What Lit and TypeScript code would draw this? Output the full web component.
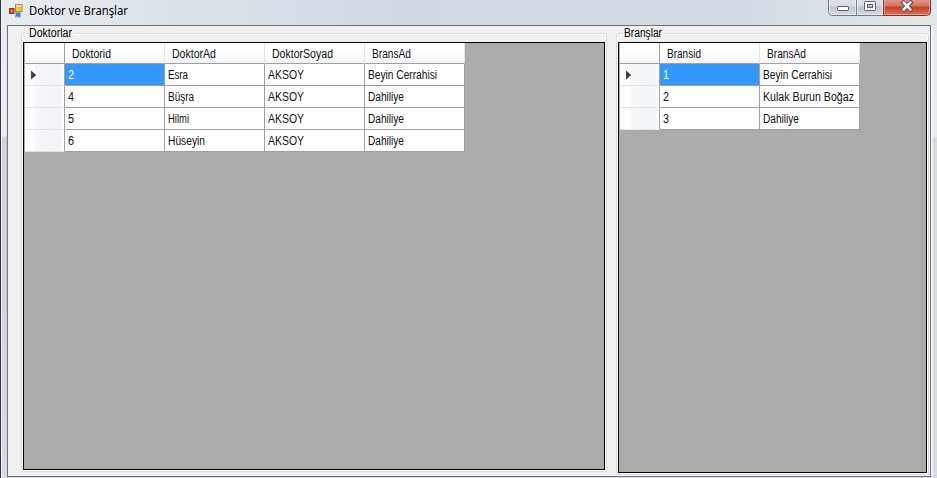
import { LitElement, html, css, svg } from "lit";
import { customElement, property } from "lit/decorators.js";
import { classMap } from "lit/directives/class-map.js";

type Label = [text: string, width: number];

/** Text fitted to a fixed advance width, as the narrow system font sets it. */
@customElement("fit-text")
class FitText extends LitElement {
  @property() text = "";
  @property({ type: Number }) width = 10;
  static styles = css`
    :host { display: block; height: 16px; }
    svg { display: block; height: 16px; overflow: visible; }
    text { font-size: var(--fit-size, 12px); font-family: var(--fit-font, "Liberation Sans", Arial, sans-serif); fill: currentColor; }
  `;
  render() {
    return html`<svg width=${this.width} height="16">
      ${svg`<text x="0" y="12" textLength=${this.width} lengthAdjust="spacingAndGlyphs">${this.text}</text>`}
    </svg>`;
  }
}

@customElement("data-grid")
class DataGrid extends LitElement {
  @property({ attribute: false }) columns: Label[] = [];
  @property({ attribute: false }) rows: Label[][] = [];
  static styles = css`
    :host { display: block; box-sizing: border-box; border: 1px solid #000; background: #ababab; color: #111; overflow: hidden; padding-left: 1px; }
    .row { display: flex; height: 22px; }
    .row.head { height: 21px; }
    .cell { box-sizing: border-box; width: 100px; border-right: 1px solid #a0a0a0; border-bottom: 1px solid #a0a0a0; background: #fff; padding: 3px 0 0 3px; }
    .head .cell { padding: 3px 0 0 7px; border-right-color: #e3e5e9; background: linear-gradient(#fff 45%, #f3f5f8); }
    .cell.selected { background: #3399ff; color: #fff; }
    .stub { box-sizing: border-box; width: 40px; border-right: 1px solid #a0a0a0; border-bottom: 1px solid #e2e4e8; background: linear-gradient(90deg, #fff 25%, #f7f8fa 27%, #f1f3f6 90%, #fff 97%); padding: 6px 0 0 6px; }
    .head .stub { border-bottom-color: #a0a0a0; background: linear-gradient(#fff 45%, #f3f5f8); }
    .stub svg { display: block; }
  `;
  render() {
    return html`
      <div class="row head">
        <div class="stub"></div>
        ${this.columns.map(([t, w]) => html`<div class="cell"><fit-text .text=${t} .width=${w}></fit-text></div>`)}
      </div>
      ${this.rows.map((row, r) => html`<div class="row">
        <div class="stub">${r === 0
          ? html`<svg width="6" height="10" viewBox="0 0 6 10"><path d="M0 .5 5.3 5 0 9.5Z" fill="#404040" /></svg>`
          : ""}</div>
        ${row.map(([t, w], c) => html`<div class=${classMap({ cell: true, selected: r === 0 && c === 0 })}>
          <fit-text .text=${t} .width=${w}></fit-text></div>`)}
      </div>`)}
    `;
  }
}

@customElement("app-root")
class AppRoot extends LitElement {
  static styles = css`
    :host { display: block; width: 937px; height: 478px; overflow: hidden; }
    .window { box-sizing: border-box; width: 937px; height: 478px; border-left: 1px solid #34343c; padding: 0 6px 0 6px; display: flex; flex-direction: column;
      background:
        linear-gradient(90deg, #f5f5f8, #f5f5f8) 0 0 / 1px 478px no-repeat,
        linear-gradient(#f3f5f7, #f3f5f7) 930px 25px / 2px 452px no-repeat,
        linear-gradient(90deg, #e9edf1 0, #dce1e7 180px, #d2d9e1 400px, #d5dbe2 750px, #e3e7ea 937px) 0 0 / 100% 25px no-repeat,
        linear-gradient(#e6eaed 0, #e9ecef 111px, #d5dce2 113px, #d5dce2 100%) 932px 25px / 5px 453px no-repeat,
        linear-gradient(#e7eaef 0, #e9ebef 136px, #cfd0d9 138px, #d8dae1 100%); }
    .title { height: 25px; flex: none; display: flex; align-items: flex-start; color: #000; }
    .logo { margin: 4px 0 0 2px; width: 14px; height: 14px; }
    .title fit-text { margin: 3px 0 0 6px; --fit-font: "Noto Sans", sans-serif; --fit-size: 12px; }
    .buttons { margin: 0 0 0 auto; height: 16px; width: 103px; }
    .client { box-sizing: border-box; height: 452px; border: 1px solid #6d7075; background: #f0f0f0; display: flex; align-items: flex-start; padding: 7px 0 0 13px; gap: 9px; }
    .group { box-sizing: border-box; border: 1px solid #dcdcdc; box-shadow: inset 0 0 0 1px #fff; border-radius: 3px; padding: 8px 1px 0 1px; position: relative; background: #f0f0f0; }
    .doctors { width: 586px; height: 439px; }
    .branches { width: 313px; height: 442px; }
    .legend { position: absolute; left: 6px; top: -9px; height: 16px; padding: 0 2px 0 1px; background: linear-gradient(transparent 4px, #f0f0f0 4px); color: #000; }
    .doctors data-grid { width: 582px; height: 428px; }
    .branches data-grid { width: 309px; height: 431px; }
  `;

  private logo() {
    return html`<svg class="logo" viewBox="0 0 14 14">
      <rect x="6.5" y="8.5" width="5" height="4.5" fill="#3f86e0" stroke="#8fb4e4" />
      <rect x="6.5" y=".5" width="6.500" height="7" fill="#f8c62d" stroke="#b08a3a" />
      <rect x="7" y="1" width="5.500" height="2" fill="#ffe386" />
      <rect x=".5" y="4.500" width="4.500" height="5" fill="#d8402f" stroke="#94302c" />
      <rect x="2" y="6" width="1.500" height="2" fill="#f3a08c" />
    </svg>`;
  }

  private buttons() {
    return html`<svg class="buttons" width="103" height="16" viewBox="0 0 103 16">
      <defs>
        <linearGradient id="glass" x2="0" y2="1">
          <stop offset="0" stop-color="#dfe2e6" /><stop offset=".42" stop-color="#d6dade" />
          <stop offset=".5" stop-color="#bfc6cd" /><stop offset="1" stop-color="#d8dee4" />
        </linearGradient>
        <linearGradient id="red" x2="0" y2="1">
          <stop offset="0" stop-color="#e09c8c" /><stop offset=".4" stop-color="#d37560" />
          <stop offset=".5" stop-color="#c2432b" /><stop offset="1" stop-color="#dc7752" />
        </linearGradient>
      </defs>
      <path d="M.5-1V11.500Q.5 15.500 4.500 15.500H55.500V-1Z" fill="url(#glass)" stroke="#737a83" />
      <path d="M55.500-1V15.500H98.500Q102.500 15.500 102.500 11.500V-1Z" fill="url(#red)" stroke="#713a38" />
      <path d="M28.500 0V15" stroke="#7c838c" />
      <path d="M1.500 0V11.500Q1.500 14.500 4.500 14.500H27.500V0M29.500 0V14.500H54.500V0" fill="none" stroke="#eef1f4" stroke-opacity=".7" />
      <path d="M56.500 0V14.500H98.500Q101.500 14.500 101.500 11.500V0" fill="none" stroke="#f4b8a4" stroke-opacity=".65" />
      <rect x="9.500" y="6.500" width="11" height="4" rx=".7" fill="#fff" stroke="#596069" />
      <rect x="36.500" y="1.500" width="11" height="9" rx=".7" fill="#fff" stroke="#596069" />
      <rect x="39.500" y="4.500" width="5" height="3" fill="#bac2ca" stroke="#596069" />
      <path d="M75.500 2.500 82.500 9.500M82.500 2.500 75.500 9.500" stroke="#704b50" stroke-width="4.400" stroke-linecap="square" />
      <path d="M75.700 2.500 82.300 9.500M82.300 2.500 75.700 9.500" stroke="#fff" stroke-width="2.500" stroke-linecap="square" />
    </svg>`;
  }

  render() {
    const doctorColumns: Label[] = [["Doktorid", 39], ["DoktorAd", 44], ["DoktorSoyad", 61], ["BransAd", 39]];
    const doctors: Label[][] = [
      [["2", 6], ["Esra", 20], ["AKSOY", 36], ["Beyin Cerrahisi", 69]],
      [["4", 6], ["Büşra", 26], ["AKSOY", 36], ["Dahiliye", 36]],
      [["5", 6], ["Hilmi", 21], ["AKSOY", 36], ["Dahiliye", 36]],
      [["6", 6], ["Hüseyin", 37], ["AKSOY", 36], ["Dahiliye", 36]],
    ];
    const branchColumns: Label[] = [["Bransid", 34], ["BransAd", 39]];
    const branches: Label[][] = [
      [["1", 6], ["Beyin Cerrahisi", 69]],
      [["2", 6], ["Kulak Burun Boğaz", 91]],
      [["3", 6], ["Dahiliye", 36]],
    ];
    return html`<div class="window">
      <div class="title">${this.logo()}<fit-text text="Doktor ve Branşlar" width="99"></fit-text>${this.buttons()}</div>
      <div class="client">
        <div class="group doctors">
          <div class="legend"><fit-text text="Doktorlar" width="43"></fit-text></div>
          <data-grid .columns=${doctorColumns} .rows=${doctors}></data-grid>
        </div>
        <div class="group branches">
          <div class="legend"><fit-text text="Branşlar" width="38"></fit-text></div>
          <data-grid .columns=${branchColumns} .rows=${branches}></data-grid>
        </div>
      </div>
    </div>`;
  }
}
